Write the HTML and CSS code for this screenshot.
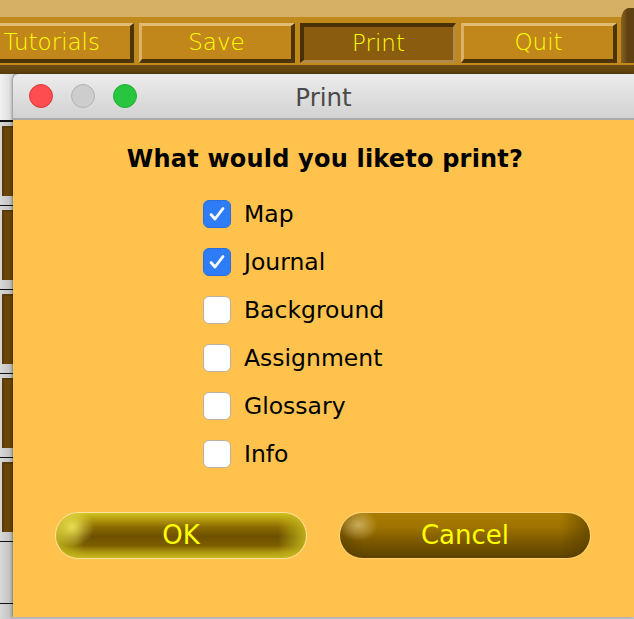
FILE: index.html
```html
<!DOCTYPE html>
<html>
<head>
<meta charset="utf-8">
<link rel="stylesheet" href="styles.css">
</head>
<body>
<div class="app">
  <div class="toolbar">
    <div class="tb-top"></div>
    <div class="tb-row">
      <div class="tbtn first">Tutorials</div>
      <div class="tbtn">Save</div>
      <div class="tbtn pressed">Print</div>
      <div class="tbtn">Quit</div>
      <div class="tb-fill"></div>
    </div>
    <div class="tb-line"></div>
    <div class="tb-dark"></div>
  </div>
  <div class="main">
    <div class="side">
      <div class="side-head"></div>
      <div class="cell"><div class="blk"></div></div>
      <div class="cell"><div class="blk"></div></div>
      <div class="cell"><div class="blk"></div></div>
      <div class="cell"><div class="blk"></div></div>
      <div class="cell"><div class="blk"></div></div>
      <div class="cell last"></div>
    </div>
    <div class="dialog">
      <div class="titlebar">
        <div class="lights">
          <span class="light red"></span>
          <span class="light gray"></span>
          <span class="light green"></span>
        </div>
        <div class="title">Print</div>
      </div>
      <div class="content">
        <div class="question">What would you liketo print?</div>
        <div class="options">
          <label class="opt"><span class="cb on"><svg viewBox="0 0 28 28" width="28" height="28"><path d="M8 14.5 L12 19 L20 8.5" fill="none" stroke="#fff" stroke-width="2.8" stroke-linecap="round" stroke-linejoin="round"/></svg></span><span class="lbl">Map</span></label>
          <label class="opt"><span class="cb on"><svg viewBox="0 0 28 28" width="28" height="28"><path d="M8 14.5 L12 19 L20 8.5" fill="none" stroke="#fff" stroke-width="2.8" stroke-linecap="round" stroke-linejoin="round"/></svg></span><span class="lbl">Journal</span></label>
          <label class="opt"><span class="cb"></span><span class="lbl">Background</span></label>
          <label class="opt"><span class="cb"></span><span class="lbl">Assignment</span></label>
          <label class="opt"><span class="cb"></span><span class="lbl">Glossary</span></label>
          <label class="opt"><span class="cb"></span><span class="lbl">Info</span></label>
        </div>
        <div class="actions">
          <div class="pill ok">OK</div>
          <div class="pill cancel">Cancel</div>
        </div>
      </div>
    </div>
  </div>
</div>
</body>
</html>
```
FILE: styles.css
```css
html, body {
  margin: 0;
  padding: 0;
}
body {
  width: 634px;
  height: 619px;
  overflow: hidden;
  background: #c9c9c9;
  font-family: "DejaVu Sans", sans-serif;
}
.app {
  display: flex;
  flex-direction: column;
  height: 619px;
}
.toolbar {
  display: flex;
  flex-direction: column;
  height: 74px;
  flex: none;
  background: #bd881d;
}
.tb-top {
  height: 17px;
  background: #d6b064;
}
.tb-row {
  display: flex;
  gap: 5px;
  padding-top: 6px;
  height: 40px;
  background: #bf891c;
}
.tbtn {
  width: 156px;
  height: 40px;
  box-sizing: border-box;
  flex: none;
  background: #c2871b;
  border-top: 3px solid #e2bc74;
  border-left: 3px solid #dcb068;
  border-right: 4px solid #4c3308;
  border-bottom: 4px solid #4c3308;
  color: #ffff00;
  font-family: "DejaVu Sans", sans-serif;
  font-weight: 200;
  font-size: 23px;
  line-height: 33px;
  text-align: center;
  -webkit-font-smoothing: none;
}
.tbtn.first {
  margin-left: -22px;
  text-align: right;
  padding-right: 30px;
}
.tbtn.pressed {
  background: #8a5c10;
  border-top: 4px solid #4a3006;
  border-left: 4px solid #4a3006;
  border-right: 3px solid #b48a48;
  border-bottom: 3px solid #b48a48;
}
.tb-fill {
  flex: 1;
  margin-top: -15px;
  margin-left: -1px;
  height: 72px;
  background: linear-gradient(90deg, #8a6220, #5f4212 50%);
  border-top-left-radius: 8px 12px;
}
.tb-line {
  height: 2px;
  background: #bf891c;
}
.tb-dark {
  height: 9px;
  background: linear-gradient(#6e4b10, #5a3d0c);
}
.main {
  display: flex;
  flex: 1;
  min-height: 0;
}
.side {
  width: 13px;
  flex: none;
  display: flex;
  flex-direction: column;
  background: linear-gradient(90deg, #d8d8d8, #bdbdbd);
}
.side-head {
  height: 48px;
  flex: none;
  box-sizing: border-box;
  background: linear-gradient(90deg, #f2f2f2, #d9d9d9);
  border-bottom: 2px solid #111;
}
.cell {
  height: 84px;
  flex: none;
  box-sizing: border-box;
  padding: 4px 0 0 2px;
  border-bottom: 1px solid #111;
}
.cell.last {
  height: 62px;
}
.blk {
  width: 11px;
  height: 70px;
  box-sizing: border-box;
  background: #6a4408;
  border-left: 2px solid #5a3a06;
  border-top: 2px solid #5a3a06;
}
.dialog {
  flex: 1;
  display: flex;
  flex-direction: column;
  height: 543px;
  border-top-left-radius: 6px;
  overflow: hidden;
  box-shadow: -1px 0 3px rgba(0,0,0,0.35);
  margin-bottom: 2px;
}
.titlebar {
  height: 46px;
  flex: none;
  box-sizing: border-box;
  display: flex;
  align-items: center;
  position: relative;
  background: linear-gradient(#ececec, #d2d2d2);
  border-bottom: 2px solid #a9a9a9;
}
.lights {
  display: flex;
  gap: 18px;
  padding-left: 16px;
  margin-top: -1px;
}
.light {
  width: 24px;
  height: 24px;
  border-radius: 50%;
  box-sizing: border-box;
}
.light.red {
  background: #fe4d50;
  border: 1px solid #e03a3c;
}
.light.gray {
  background: #cdcdcd;
  border: 1px solid #b2b2b2;
}
.light.green {
  background: #29c53f;
  border: 1px solid #1fae33;
}
.title {
  position: absolute;
  left: 0;
  right: 0;
  top: 0;
  height: 44px;
  line-height: 48px;
  text-align: center;
  font-size: 24.5px;
  color: #4a4a4a;
}
.content {
  flex: 1;
  background: #ffc34d;
  padding-top: 24px;
  display: flex;
  flex-direction: column;
}
.question {
  height: 30px;
  line-height: 30px;
  text-align: center;
  font-weight: bold;
  font-size: 24px;
  letter-spacing: 0.2px;
  color: #000;
  padding-left: 3px;
}
.options {
  display: flex;
  flex-direction: column;
  padding-left: 190px;
  margin-top: 16px;
}
.opt {
  height: 48px;
  display: flex;
  align-items: center;
  gap: 13px;
}
.cb {
  width: 28px;
  height: 28px;
  box-sizing: border-box;
  border-radius: 6px;
  background: #fff;
  border: 1px solid #b9b2a0;
  display: block;
  flex: none;
}
.cb.on {
  background: #2e7cf6;
  border: 1px solid #2a6fe0;
}
.cb svg {
  display: block;
  margin: -1px;
}
.lbl {
  font-size: 23.5px;
  color: #000;
  line-height: 28px;
}
.actions {
  display: flex;
  gap: 34px;
  padding-left: 43px;
  margin-top: 35px;
}
.pill {
  width: 250px;
  height: 45px;
  border-radius: 23px;
  color: #ffff00;
  font-size: 26px;
  line-height: 45px;
  text-align: center;
  -webkit-font-smoothing: none;
}
.pill.ok {
  background:
    radial-gradient(ellipse 22px 20px at 16px 14px, rgba(240,230,90,0.9), rgba(240,230,90,0) 100%),
    linear-gradient(90deg, rgba(200,190,30,0.85) 0, rgba(200,190,30,0) 28px, rgba(200,190,30,0) 222px, rgba(200,190,30,0.85) 250px),
    linear-gradient(#cfc522 0, #b49a0e 14%, #8a6a00 32%, #6e5000 52%, #7c5e00 72%, #b09a10 88%, #c8b820 100%);
  box-shadow: 0 0 0 1px rgba(255,255,230,0.55);
}
.pill.cancel {
  background:
    radial-gradient(ellipse 20px 16px at 18px 12px, rgba(215,190,120,0.75), rgba(215,190,120,0) 100%),
    linear-gradient(90deg, rgba(80,56,0,0.5) 0, rgba(80,56,0,0) 24px, rgba(80,56,0,0) 220px, rgba(80,56,0,0.6) 250px),
    linear-gradient(#a97c00 0, #a07400 30%, #7a5800 65%, #5c4200 100%);
  box-shadow: 0 0 0 1px rgba(255,240,200,0.35);
}
```
